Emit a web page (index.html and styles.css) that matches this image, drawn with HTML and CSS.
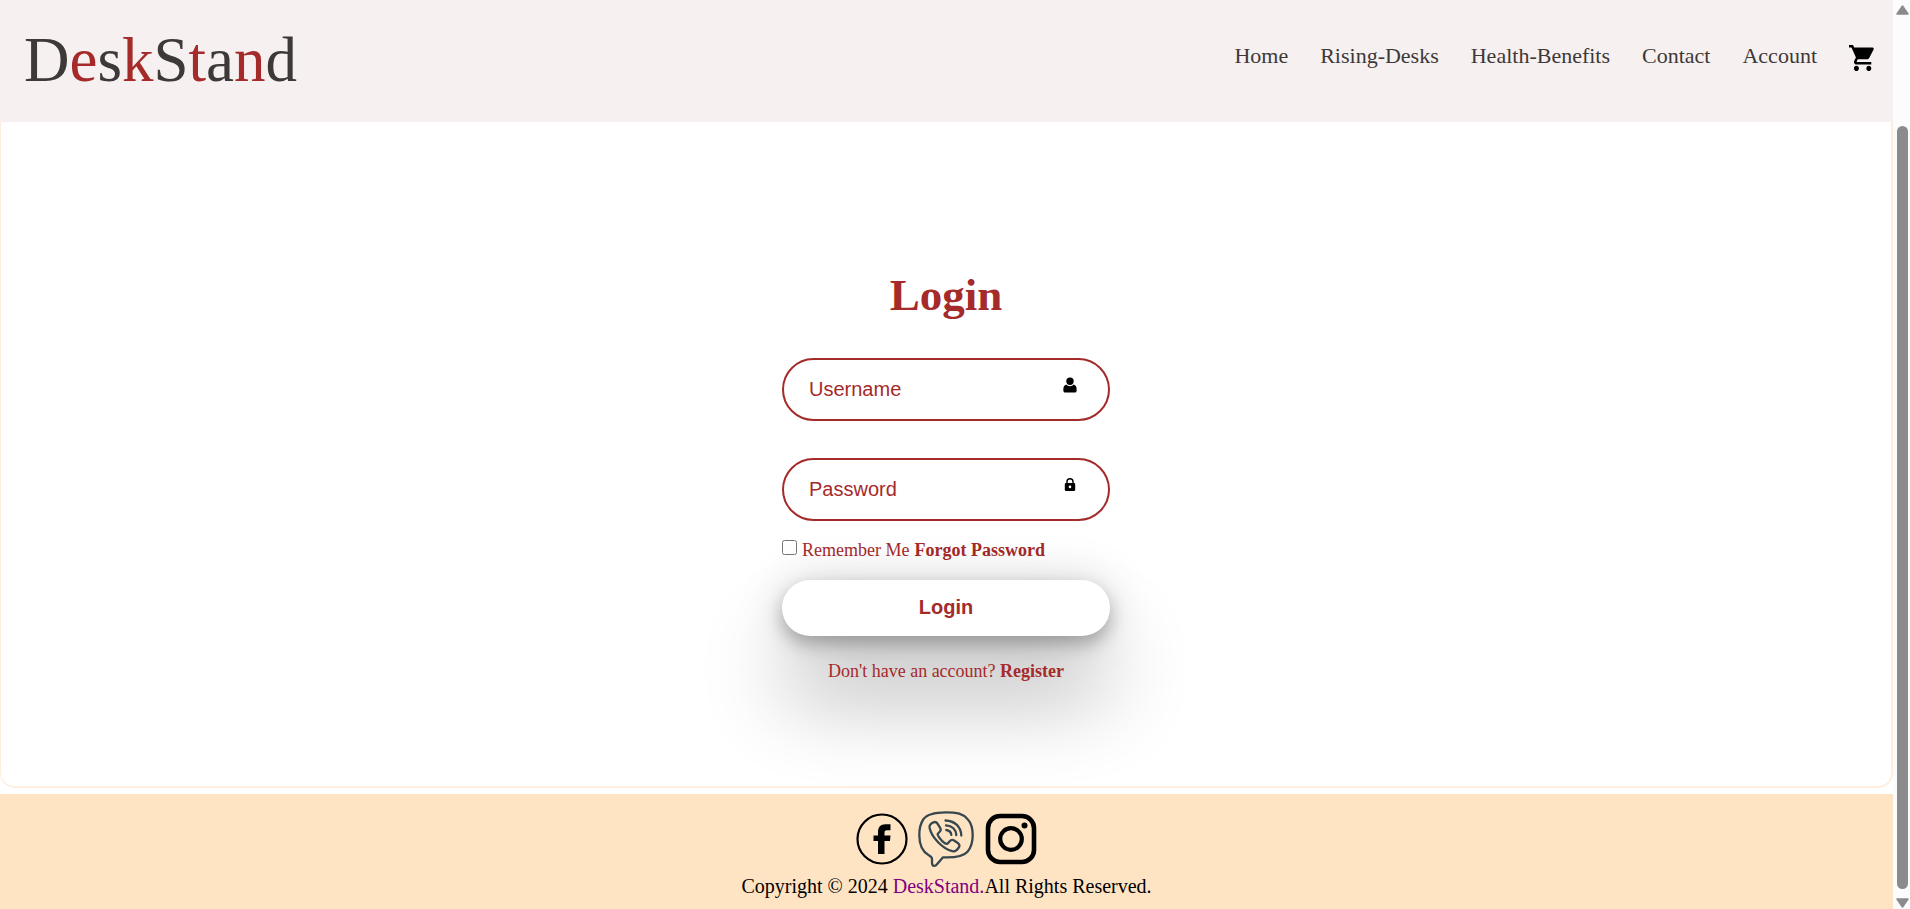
FILE: index.html
```html
<!DOCTYPE html>
<html lang="en">
<head>
<meta charset="utf-8">
<meta name="viewport" content="width=device-width, initial-scale=1">
<title>DeskStand - Login</title>
<link rel="stylesheet" href="styles.css">
</head>
<body>
<div class="page">
  <header class="header">
    <a class="logo" href="#">D<span class="accent">e</span>s<span class="accent">k</span>S<span class="accent">t</span>a<span class="accent">n</span>d</a>
    <nav class="nav">
      <a href="#">Home</a>
      <a href="#">Rising-Desks</a>
      <a href="#">Health-Benefits</a>
      <a href="#">Contact</a>
      <a href="#">Account</a>
      <a class="cart" href="#" aria-label="Cart">
        <svg viewBox="1 2 21 20" width="26" height="26" preserveAspectRatio="none"><path d="M7 18c-1.100 0-1.990.9-1.990 2S5.900 22 7 22s2-.9 2-2-.9-2-2-2zM1 2v2h2l3.600 7.590-1.350 2.450c-.16.280-.25.610-.25.960 0 1.100.9 2 2 2h12v-2H7.420c-.14 0-.25-.11-.25-.25l.03-.12.900-1.630h7.450c.75 0 1.410-.41 1.750-1.030l3.580-6.490A1 1 0 0 0 20 4H5.210l-.94-2H1zm16 16c-1.100 0-1.990.9-1.990 2s.89 2 1.990 2 2-.9 2-2-.9-2-2-2z"/></svg>
      </a>
    </nav>
  </header>

  <main class="main">
    <form class="login">
      <h1>Login</h1>
      <div class="field">
        <input type="text" placeholder="Username" aria-label="Username">
        <svg class="field-icon" viewBox="0 0 16 16" width="16" height="16"><circle cx="8" cy="4.300" r="3.700"/><path d="M4.300 7.600C5.300 8.700 6.500 9.200 8 9.200s2.700-.5 3.700-1.600c2.100.5 3 2.400 3 5.400 0 1.700-.7 2.600-2.200 2.600h-9c-1.500 0-2.200-.9-2.200-2.600 0-3 .9-4.900 3-5.400z"/></svg>
      </div>
      <div class="field">
        <input type="password" placeholder="Password" aria-label="Password">
        <svg class="field-icon" viewBox="0 0 16 16" width="16" height="16"><path d="M5 7V4.800a3 3 0 0 1 6 0V7" fill="none" stroke="#000" stroke-width="1.400"/><path fill-rule="evenodd" d="M4 6h8a1.200 1.200 0 0 1 1.200 1.200v5.600A1.200 1.200 0 0 1 12 14H4a1.200 1.200 0 0 1-1.200-1.200V7.200A1.200 1.200 0 0 1 4 6zm4 2.600a1.300 1.300 0 1 0 0 2.600 1.300 1.300 0 0 0 0-2.600z"/></svg>
      </div>
      <div class="options">
        <input type="checkbox" id="remember">
        <label for="remember">Remember Me</label>
        <a href="#">Forgot Password</a>
      </div>
      <button class="submit" type="submit">Login</button>
      <p class="register">Don't have an account? <a href="#">Register</a></p>
    </form>
  </main>

  <footer class="footer">
    <div class="social">
      <a href="#" aria-label="Facebook">
        <svg viewBox="1 0 56 56" width="56" height="56"><circle cx="28" cy="28" r="24.500" fill="none" stroke="#000" stroke-width="2.200"/><path d="M24 43V30h-4.500v-5.500H24V21c0-5 2.500-7.800 7.500-7.800h5v6h-3.600c-1.700 0-2.400.8-2.400 2.400v2.900h6L36 30h-5.500v13z"/></svg>
      </a>
      <a href="#" aria-label="Viber">
        <svg viewBox="1 0 56 56" width="56" height="56" fill="none" stroke="#37474f" stroke-width="2.300" stroke-linejoin="round" stroke-linecap="round"><path d="M28 1.300C17 1.300 9 2.800 5.200 8.500 2.300 13 1.300 18 1.300 24c0 9.500 2.500 16.500 9.500 20.200 1.800 1 3.200 1.600 3.200 3.800v4c0 3.200 3 3.800 5 1.200l5.800-6.800H29c9.500 0 16.700-1.300 20.500-5.700C53.400 36.200 54.700 30.500 54.700 24c0-7-1.500-12-5-15.800C45 2.800 39 1.300 28 1.300z"/><path d="M15.500 11.300c1.600-.6 2.800-.3 3.800 1l3 4.800c.8 1.500.4 2.800-.8 3.900l-1.700 1.700c-.9 1.300 3.700 7.400 6.700 9.300 1.600 1 2.600 1.100 3.600.1l1.600-1.900c1.200-1.400 2.500-1.700 4-.9l4.500 3c1.500 1.200 1.600 2.300.8 3.800-1.700 3-4 4.600-6.700 4.100C24.500 37.700 13.800 26.500 11.600 17c-.5-2.500 1.200-4.500 3.900-5.700z"/><path d="M27.500 9.500C37 9.800 43 16 43.300 24.500M28 14.300c6.300.4 10 4.300 10.300 9.800M28.300 19c3 .4 4.700 2.200 5 4.900"/></svg>
      </a>
      <a href="#" aria-label="Instagram">
        <svg viewBox="0 0 56 56" width="56" height="56"><rect x="5" y="5" width="46" height="46" rx="12" fill="none" stroke="#000" stroke-width="4.600"/><circle cx="28" cy="28" r="10.800" fill="none" stroke="#000" stroke-width="4.200"/><circle cx="41.500" cy="14.500" r="3"/></svg>
      </a>
    </div>
    <p class="copyright">Copyright © 2024 <a href="#">DeskStand.</a>All Rights Reserved.</p>
  </footer>
</div>
<div class="scrollbar" aria-hidden="true">
  <svg viewBox="0 0 13 10" width="13" height="10"><path d="M6.500 1 12 9H1z" stroke="#8b8b8b" stroke-linejoin="round" stroke-width="1.500"/></svg>
  <div class="thumb"></div>
  <svg viewBox="0 0 13 10" width="13" height="10"><path d="M1 1h11L6.500 9z" stroke="#8b8b8b" stroke-linejoin="round" stroke-width="1.500"/></svg>
</div>
</body>
</html>
```

FILE: styles.css
```css
* {
  box-sizing: border-box;
}

body {
  margin: 0;
  min-height: 100vh;
  display: grid;
  grid-template-columns: 1fr 17px;
  background: #fff;
  font-family: "Liberation Serif", "Times New Roman", serif;
}

a {
  color: inherit;
  text-decoration: none;
}

.page {
  display: flex;
  flex-direction: column;
}

.header {
  display: flex;
  justify-content: space-between;
  align-items: flex-start;
  padding: 24px 18px 26px 24px;
  background: #f6f0f0;
  color: #3d3938;
}

.logo {
  font-size: 63px;
  line-height: 72px;
}

.accent {
  color: brown;
}

.nav {
  display: flex;
  gap: 32px;
  padding-top: 20px;
  font-size: 22px;
  line-height: 24px;
}

.cart {
  padding-top: 1px;
}

svg {
  display: block;
  overflow: visible;
}

.main {
  flex: 1;
  display: flex;
  justify-content: center;
  margin-bottom: 6px;
  padding: 143px 0 72px;
  border: 2px solid #ffeedd;
  border-top: 0;
  border-left-width: 1px;
  border-radius: 0 0 15px 15px;
}

.login {
  display: flex;
  flex-direction: column;
  width: 328px;
  color: brown;
  font-size: 18px;
  line-height: 20px;
}

.login h1 {
  margin: 0 0 33px;
  font-size: 45px;
  line-height: 60px;
  text-align: center;
}

.field {
  position: relative;
  margin-bottom: 37px;
}

.field input {
  display: block;
  width: 100%;
  height: 63px;
  padding: 0 60px 0 25px;
  border: 2px solid brown;
  border-radius: 32px;
  background: transparent;
  color: brown;
  font: 20px "Liberation Sans", Arial, sans-serif;
}

.field input::placeholder {
  color: brown;
}

.field-icon {
  position: absolute;
  top: 19px;
  right: 32px;
}

.options {
  display: flex;
  align-items: flex-start;
  margin: -18px 0 20px;
}

.options input {
  width: 15px;
  height: 15px;
  margin: 0 5px 0 0;
}

.options a {
  margin-left: 5px;
}

.options a,
.register a {
  font-weight: bold;
}

.submit {
  height: 56px;
  padding: 0 0 2px;
  border: 0;
  border-radius: 28px;
  background: #fff;
  box-shadow:
    0 8px 18px rgba(0, 0, 0, 0.28),
    0 0 50px rgba(0, 0, 0, 0.14),
    0 60px 85px rgba(0, 0, 0, 0.3);
  color: brown;
  font: bold 20px "Liberation Sans", Arial, sans-serif;
}

.register {
  margin: 25px 0 0;
  text-align: center;
}

.footer {
  padding: 17px 0 11px;
  background: #ffe4c4;
  text-align: center;
}

.social {
  display: flex;
  justify-content: center;
  gap: 8px;
}

.copyright {
  margin: 7px 0 0;
  font-size: 20px;
  line-height: 24px;
}

.copyright a {
  color: purple;
}

.scrollbar {
  display: flex;
  flex-direction: column;
  align-items: center;
  padding: 5px 0 1px 2px;
  background: #fcfcfc;
  fill: #8b8b8b;
}

.thumb {
  flex: 1;
  width: 11px;
  margin: 111px 0 9px;
  border-radius: 6px;
  background: #8b8b8b;
}
```
